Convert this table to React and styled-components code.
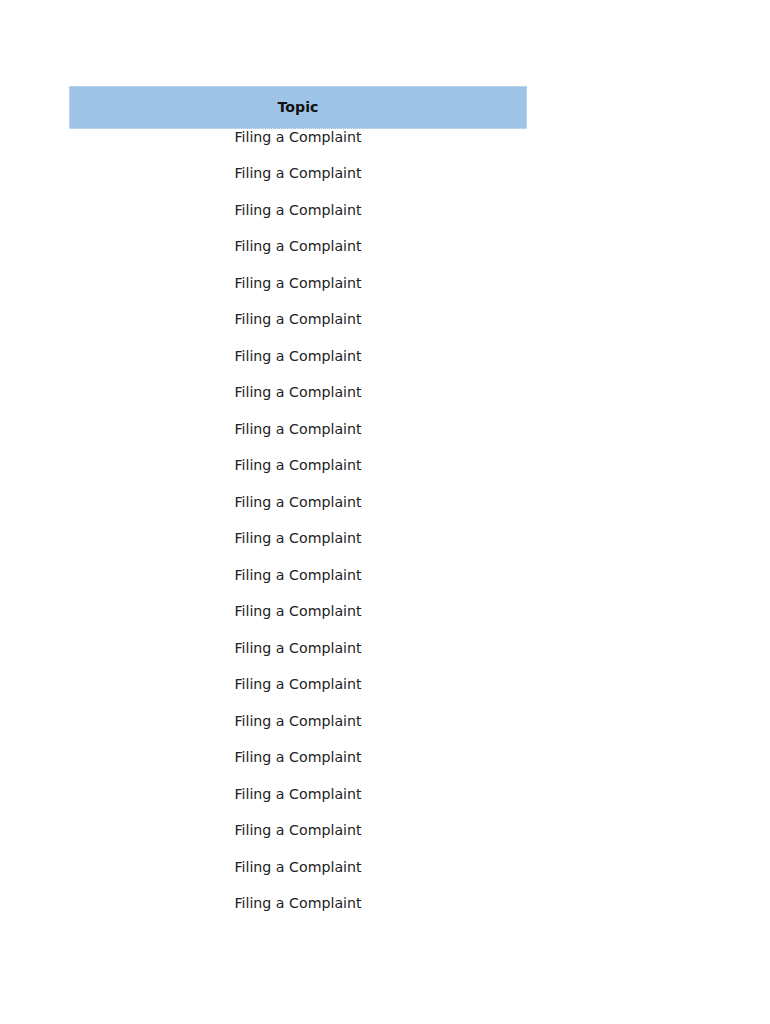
import React from 'react';
import styled, { createGlobalStyle } from 'styled-components';

const GlobalStyle = createGlobalStyle`
  html, body {
    margin: 0;
    padding: 0;
    background: #ffffff;
  }
  body {
    font-family: "DejaVu Sans", sans-serif;
  }
`;

const Page = styled.div`
  width: 770px;
  height: 1024px;
  padding: 86px 0 0 69px;
  box-sizing: border-box;
`;

const Table = styled.div`
  width: 458px;
  display: flex;
  flex-direction: column;
`;

const Header = styled.div`
  height: 42.5px;
  background: #9dc3e6;
  border: 1px dotted #d6e2ee;
  box-sizing: border-box;
  display: flex;
  align-items: center;
  justify-content: center;
  font-size: 14.2px;
  font-weight: bold;
  color: #111111;
`;

const Row = styled.div`
  height: 36.5px;
  line-height: 17px;
  text-align: center;
  font-size: 14.2px;
  color: #222222;
`;

const rows = Array.from({ length: 22 }, () => 'Filing a Complaint');

export default function App() {
  return (
    <>
      <GlobalStyle />
      <Page>
        <Table>
          <Header>Topic</Header>
          {rows.map((text, i) => (
            <Row key={i}>{text}</Row>
          ))}
        </Table>
      </Page>
    </>
  );
}
